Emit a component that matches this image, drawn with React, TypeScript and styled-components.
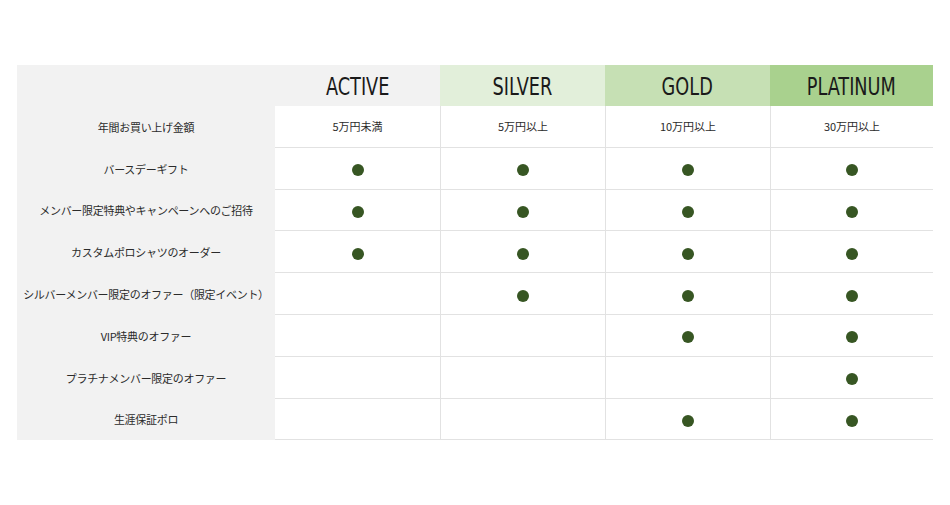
import React from "react";
import styled, { createGlobalStyle } from "styled-components";

const GlobalStyle = createGlobalStyle`
  html, body {
    margin: 0;
    padding: 0;
    background: #ffffff;
  }
  body {
    font-family: "Noto Sans CJK JP", "Noto Sans", sans-serif;
  }
`;

const Page = styled.div`
  width: 950px;
  height: 505px;
  padding: 65px 0 0 17px;
  box-sizing: border-box;
`;

const Table = styled.div`
  display: grid;
  grid-template-columns: 258px 165px 165px 165px 163px;
  grid-template-rows: 41px repeat(8, 41.8px);
`;

const HeaderCell = styled.div<{ $bg: string }>`
  display: flex;
  align-items: center;
  justify-content: center;
  background: ${({ $bg }) => $bg};
  padding-top: 2px;
  box-sizing: border-box;
`;

const TierName = styled.span`
  display: inline-block;
  font-family: "Liberation Sans Narrow", "DejaVu Sans Condensed", "DejaVu Sans", sans-serif;
  font-size: 24px;
  color: #1a1a1a;
  transform: scaleX(0.82);
`;

const LabelCell = styled.div`
  display: flex;
  align-items: center;
  justify-content: center;
  background: #f2f2f2;
  font-size: 11px;
  color: #2b2b2b;
  white-space: nowrap;
  letter-spacing: -0.3px;
`;

const ValueCell = styled.div<{ $divider: boolean }>`
  display: flex;
  align-items: center;
  justify-content: center;
  background: #ffffff;
  border-bottom: 1px solid #e2e2e2;
  border-left: ${({ $divider }) => ($divider ? "1px solid #e2e2e2" : "none")};
  box-sizing: border-box;
  font-size: 11px;
  color: #2b2b2b;
`;

const Dot = styled.span`
  display: block;
  width: 12px;
  height: 12px;
  margin-top: 4px;
  border-radius: 50%;
  background: #375623;
`;

const tiers = [
  { name: "ACTIVE", bg: "#f2f2f2" },
  { name: "SILVER", bg: "#e2efda" },
  { name: "GOLD", bg: "#c6e0b4" },
  { name: "PLATINUM", bg: "#a9d18e" },
];

type Row = { label: string; cells: (string | boolean)[] };

const rows: Row[] = [
  { label: "年間お買い上げ金額", cells: ["5万円未満", "5万円以上", "10万円以上", "30万円以上"] },
  { label: "バースデーギフト", cells: [true, true, true, true] },
  { label: "メンバー限定特典やキャンペーンへのご招待", cells: [true, true, true, true] },
  { label: "カスタムポロシャツのオーダー", cells: [true, true, true, true] },
  { label: "シルバーメンバー限定のオファー（限定イベント）", cells: [false, true, true, true] },
  { label: "VIP特典のオファー", cells: [false, false, true, true] },
  { label: "プラチナメンバー限定のオファー", cells: [false, false, false, true] },
  { label: "生涯保証ポロ", cells: [false, false, true, true] },
];

const App: React.FC = () => {
  return (
    <>
      <GlobalStyle />
      <Page>
        <Table>
          <HeaderCell $bg="#f2f2f2" />
          {tiers.map((tier) => (
            <HeaderCell $bg={tier.bg} key={tier.name}>
              <TierName>{tier.name}</TierName>
            </HeaderCell>
          ))}

          {rows.map((row) => (
            <React.Fragment key={row.label}>
              <LabelCell>{row.label}</LabelCell>
              {row.cells.map((cell, i) => (
                <ValueCell $divider={i > 0} key={`${row.label}-${i}`}>
                  {typeof cell === "string" ? cell : cell ? <Dot /> : null}
                </ValueCell>
              ))}
            </React.Fragment>
          ))}
        </Table>
      </Page>
    </>
  );
};

export default App;
